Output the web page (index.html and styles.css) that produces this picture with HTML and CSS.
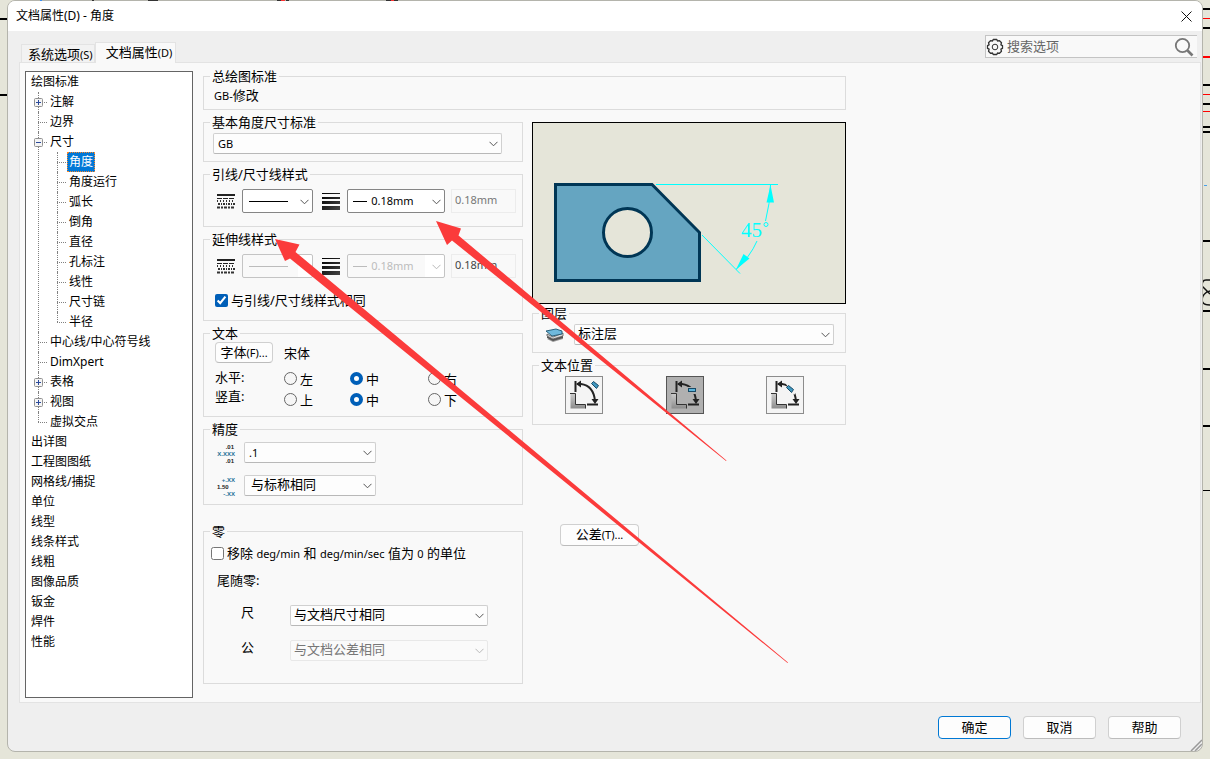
FILE: index.html
```html
<!DOCTYPE html>
<html lang="zh-CN">
<head>
<meta charset="utf-8">
<title>文档属性(D) - 角度</title>
<link rel="stylesheet" href="styles.css">
</head>
<body>
<svg class="defs" width="0" height="0" aria-hidden="true">
  <defs>
    <linearGradient id="dark" x1="0" x2="1" y1="0" y2="1"><stop offset="0" stop-color="#000"/><stop offset="1" stop-color="#444"/></linearGradient>
    <linearGradient id="grey" x1="0" x2="0" y1="0" y2="1"><stop offset="0" stop-color="#ccc"/><stop offset="1" stop-color="#8c8c8c"/></linearGradient>
    <symbol id="chev" viewBox="0 0 9 6"><path d="M.5 .8 4.5 4.8 8.5 .8" fill="none" stroke="currentColor"/></symbol>
    <symbol id="plus" viewBox="0 0 9 9"><rect x=".5" y=".5" width="8" height="8" rx="1" fill="#f4f4f4" stroke="#919191"/><path d="M2 4.5h5M4.5 2v5" stroke="#2b4a9b"/></symbol>
    <symbol id="minus" viewBox="0 0 9 9"><rect x=".5" y=".5" width="8" height="8" rx="1" fill="#f4f4f4" stroke="#919191"/><path d="M2 4.5h5" stroke="#2b4a9b"/></symbol>
    <symbol id="styles" viewBox="0 0 19 16">
      <path d="M0 2h18" stroke="#222" stroke-width="2"/>
      <path d="M0 5.500h18" stroke="#222" stroke-dasharray="5 1 5 1"/>
      <path d="M0 8h18" stroke="#333" stroke-width="2" stroke-dasharray="1 2"/>
      <path d="M1 11h17" stroke="#333" stroke-width="2" stroke-dasharray="2 1 1 1"/>
      <path d="M0 14.500h18" stroke="#333" stroke-width="2" stroke-dasharray="3 1 2 1"/>
    </symbol>
    <symbol id="weights" viewBox="0 0 22 18">
      <path d="M3 1h18v1H3zM3 5h18v2H3zM3 9h18v3H3zM3 14h18v4H3z" fill="url(#dark)"/>
    </symbol>
    <symbol id="arc" viewBox="0 0 36 36">
      <path d="M4.500 16.500h5.500v11.500h9.500v3.500H4.500z" fill="url(#grey)"/>
      <path d="M4 16.500h5.500v11h10v4" fill="none" stroke="#333"/>
      <path d="M9.500 4v11M21 27.500h11" stroke="#222" stroke-width="2"/>
      <path d="M11 7h4C23 8 28 14 29 24" fill="none" stroke="#222" stroke-width="2"/>
      <path d="M10 7l5-3.500v7zM29 27l-3.500-5h7z" fill="#222"/>
    </symbol>
  </defs>
</svg>

<svg class="sheet" width="8" height="110" aria-hidden="true"><path d="M0 19h8M0 95h8" stroke="#000" stroke-width="2"/></svg>
<svg class="sheet sheet-right" width="8" height="500" aria-hidden="true">
  <path d="M0 9h8M0 28h8M0 85h8M0 104h8M0 127h8M0 132h8M0 241h8M0 311h8M0 369h8M0 426h8" stroke="#000" stroke-width="2"/>
  <path d="M0 490.500h8" stroke="#000"/>
  <path d="M0 18.500h8M0 94.500h8M0 111.500h8" stroke="#f00"/>
  <path d="M0 57h8" stroke="#f00" stroke-width="2"/>
  <path d="M2 185.500h3" stroke="#4aa0e8"/>
  <path d="M8 280H4C1 280 0 283 0 286L8 294M8 291C3 292 0 296 0 300C0 303 2 305 8 305" fill="none" stroke="#111" stroke-width="1.500"/>
</svg>

<main class="window">
  <header class="titlebar">
    <h1>文档属性(D) - 角度</h1>
    <button class="close" aria-label="关闭"><svg width="11" height="11" viewBox="0 0 11 11"><path d="M.5.5l10 10M10.500.5l-10 10" stroke="#111"/></svg></button>
  </header>

  <div class="tabbar">
    <div class="tabs" role="tablist">
      <button class="tab" role="tab">系统选项<small>(S)</small></button>
      <button class="tab active" role="tab" aria-selected="true">文档属性<small>(D)</small></button>
    </div>
    <label class="search">
      <svg width="18" height="18" viewBox="0 0 18 18" fill="none" stroke="#333"><circle cx="9" cy="9" r="2.800"/><path d="M7.200 1.500h3.600l.7 1.500 2-.3 2 2-.6 2.100 1.600.8v2.800l-1.600.8.6 2.100-2 2-2-.3-.7 1.500H7.200l-.7-1.500-2 .3-2-2 .6-2.100-1.600-.8V7.600l1.600-.8-.6-2.100 2-2 2 .3z" stroke-width="1.300" stroke-linejoin="round"/></svg>
      <input type="text" placeholder="搜索选项" aria-label="搜索选项">
      <svg width="20" height="20" viewBox="0 0 20 20" fill="none" stroke="#777"><circle cx="8.500" cy="8.500" r="6.700" stroke-width="1.800"/><path d="M13.500 13.500l5 5" stroke-width="2.600"/></svg>
    </label>
  </div>

  <div class="panel">
    <nav class="tree" aria-label="选项">
      <ul>
        <li><span class="row"><span class="name">绘图标准</span></span>
          <ul class="level1">
            <li><span class="row"><button class="toggle" aria-label="展开"><svg width="9" height="9"><use href="#plus"/></svg></button><span class="name">注解</span></span></li>
            <li><span class="row"><span class="name">边界</span></span></li>
            <li><span class="row"><button class="toggle" aria-label="折叠"><svg width="9" height="9"><use href="#minus"/></svg></button><span class="name">尺寸</span></span>
              <ul class="level2">
                <li><span class="row"><span class="name selected">角度</span></span></li>
                <li><span class="row"><span class="name">角度运行</span></span></li>
                <li><span class="row"><span class="name">弧长</span></span></li>
                <li><span class="row"><span class="name">倒角</span></span></li>
                <li><span class="row"><span class="name">直径</span></span></li>
                <li><span class="row"><span class="name">孔标注</span></span></li>
                <li><span class="row"><span class="name">线性</span></span></li>
                <li><span class="row"><span class="name">尺寸链</span></span></li>
                <li><span class="row"><span class="name">半径</span></span></li>
              </ul>
            </li>
            <li><span class="row"><span class="name">中心线/中心符号线</span></span></li>
            <li><span class="row"><span class="name">DimXpert</span></span></li>
            <li><span class="row"><button class="toggle" aria-label="展开"><svg width="9" height="9"><use href="#plus"/></svg></button><span class="name">表格</span></span></li>
            <li><span class="row"><button class="toggle" aria-label="展开"><svg width="9" height="9"><use href="#plus"/></svg></button><span class="name">视图</span></span></li>
            <li><span class="row"><span class="name">虚拟交点</span></span></li>
          </ul>
        </li>
        <li><span class="row"><span class="name">出详图</span></span></li>
        <li><span class="row"><span class="name">工程图图纸</span></span></li>
        <li><span class="row"><span class="name">网格线/捕捉</span></span></li>
        <li><span class="row"><span class="name">单位</span></span></li>
        <li><span class="row"><span class="name">线型</span></span></li>
        <li><span class="row"><span class="name">线条样式</span></span></li>
        <li><span class="row"><span class="name">线粗</span></span></li>
        <li><span class="row"><span class="name">图像品质</span></span></li>
        <li><span class="row"><span class="name">钣金</span></span></li>
        <li><span class="row"><span class="name">焊件</span></span></li>
        <li><span class="row"><span class="name">性能</span></span></li>
      </ul>
    </nav>

    <form class="form">
      <fieldset class="g-overall"><legend>总绘图标准</legend><p><small>GB-</small>修改</p></fieldset>

      <div class="col">
        <fieldset class="g-base"><legend>基本角度尺寸标准</legend>
          <span class="select"><select class="latin" aria-label="基本角度尺寸标准"><option>GB</option></select><svg class="chev"><use href="#chev"/></svg></span>
        </fieldset>

        <fieldset class="g-leader"><legend>引线/尺寸线样式</legend>
          <div class="lines">
            <svg width="19" height="16"><use href="#styles"/></svg>
            <span class="select strong style"><select aria-label="引线样式"><option label=" "></option></select><svg class="stroke" width="39" height="1"><rect width="39" height="1" fill="currentColor"/></svg><svg class="chev"><use href="#chev"/></svg></span>
            <svg width="22" height="18"><use href="#weights"/></svg>
            <span class="select strong weight"><select class="latin" aria-label="引线粗细"><option>0.18mm</option></select><svg class="stroke" width="14" height="1"><rect width="14" height="1" fill="currentColor"/></svg><svg class="chev"><use href="#chev"/></svg></span>
            <input class="value" type="text" value="0.18mm" aria-label="自定义粗细" disabled>
          </div>
        </fieldset>

        <fieldset class="g-ext"><legend>延伸线样式</legend>
          <div class="lines">
            <svg width="19" height="16"><use href="#styles"/></svg>
            <span class="select dim style"><select aria-label="延伸线样式" disabled><option label=" "></option></select><svg class="stroke" width="39" height="1"><rect width="39" height="1" fill="currentColor"/></svg><svg class="chev"><use href="#chev"/></svg></span>
            <svg width="22" height="18"><use href="#weights"/></svg>
            <span class="select dim weight"><select class="latin" aria-label="延伸线粗细" disabled><option>0.18mm</option></select><svg class="stroke" width="14" height="1"><rect width="14" height="1" fill="currentColor"/></svg><svg class="chev"><use href="#chev"/></svg></span>
            <input class="value dark" type="text" value="0.18mm" aria-label="自定义粗细" disabled>
          </div>
          <label class="check"><input type="checkbox" checked>与引线/尺寸线样式相同</label>
        </fieldset>

        <fieldset class="g-text"><legend>文本</legend>
          <div class="font"><button type="button" class="btn">字体<small>(F)...</small></button><span>宋体</span></div>
          <div class="align">
            <div class="heads"><span id="hz">水平:</span><span id="vt">竖直:</span></div>
            <div class="radios">
              <div role="radiogroup" aria-labelledby="hz"><label><input type="radio" name="h">左</label><label><input type="radio" name="h" checked>中</label><label><input type="radio" name="h">右</label></div>
              <div role="radiogroup" aria-labelledby="vt"><label><input type="radio" name="v">上</label><label><input type="radio" name="v" checked>中</label><label><input type="radio" name="v">下</label></div>
            </div>
          </div>
        </fieldset>

        <fieldset class="g-prec"><legend>精度</legend>
          <div class="prec">
            <svg width="20" height="22" class="digits" aria-hidden="true"><text x="18" y="7" text-anchor="end">.01</text><text class="blue" x="19" y="14" text-anchor="end">X.XXX</text><text x="18" y="21" text-anchor="end">.01</text></svg>
            <span class="select"><select class="latin" aria-label="单位精度"><option>.1</option></select><svg class="chev"><use href="#chev"/></svg></span>
          </div>
          <div class="prec">
            <svg width="20" height="22" class="digits" aria-hidden="true"><text class="blue" x="19" y="7" text-anchor="end">+.XX</text><text x="1" y="14">1.50</text><text class="blue" x="19" y="21" text-anchor="end">-.XX</text></svg>
            <span class="select"><select class="indent" aria-label="公差精度"><option>与标称相同</option></select><svg class="chev"><use href="#chev"/></svg></span>
          </div>
        </fieldset>

        <fieldset class="g-zero"><legend>零</legend>
          <label class="check"><input type="checkbox"><span>移除 <small>deg/min</small> 和 <small>deg/min/sec</small> 值为 <small>0</small> 的单位</span></label>
          <p>尾随零:</p>
          <div class="zero"><label for="dim">尺</label><span class="select"><select id="dim"><option>与文档尺寸相同</option></select><svg class="chev"><use href="#chev"/></svg></span></div>
          <div class="zero"><label for="tol">公</label><span class="select faint"><select id="tol" disabled><option>与文档公差相同</option></select><svg class="chev"><use href="#chev"/></svg></span></div>
        </fieldset>
      </div>

      <div class="col side">
        <svg class="preview" viewBox="533 124 312 180" preserveAspectRatio="xMinYMin" role="img" aria-label="角度尺寸预览">
          <path d="M555.500 185.500H652L699.500 233.500V281.500H555.500Z" fill="#65a5c1" stroke="#003655" stroke-width="3"/>
          <circle cx="627.500" cy="233.500" r="24" fill="#e5e5d9" stroke="#003655" stroke-width="3"/>
          <g stroke="#0ff" fill="none"><path d="M656 185.500H778M702 236L740 274.500M770.500 186Q770 205 765.500 222M757 242Q750 258 736 270.500"/></g>
          <path d="M770.500 186L766.500 203.500H774ZM736 270.500L743.500 255L749.500 259.500Z" fill="#0ff"/>
          <text x="741" y="238" class="deg">45</text>
          <circle cx="766" cy="225.500" r="2" fill="none" stroke="#0ff"/>
        </svg>
        <fieldset class="g-layer"><legend>图层</legend>
          <div class="layer">
            <svg width="20" height="18" viewBox="0 0 20 18"><path d="M2 13l6 3 10-3v-3L8 13z" fill="#999"/><path d="M2 10l6 3 10-3v2L8 15 2 12z" fill="#555"/><path d="M2 8l6 3 10-4v3L8 13 2 10z" fill="#ddd" stroke="#555" stroke-width=".8"/><path d="M1 5l10-2 6 2v3L7 10z" fill="#6fb9dc" stroke="#1e556f" stroke-width=".9"/></svg>
            <span class="select"><select aria-label="图层"><option>标注层</option></select><svg class="chev"><use href="#chev"/></svg></span>
          </div>
        </fieldset>
        <fieldset class="g-pos"><legend>文本位置</legend>
          <div class="positions">
            <button type="button" aria-label="位置一"><svg width="36" height="36"><use href="#arc"/><path d="M25.500 6.500l2-2 5 4-2 3z" fill="#3f96be" stroke="#174a66"/></svg></button>
            <button type="button" class="on" aria-label="位置二"><svg width="36" height="36"><use href="#arc"/><path d="M20 10h10v7H20z" fill="#b0b0b0"/><rect x="21.500" y="11.500" width="7" height="3" fill="#5cb4dc" stroke="#174a66"/></svg></button>
            <button type="button" aria-label="位置三"><svg width="36" height="36"><use href="#arc"/><path d="M19 7l5-1 6 8-3 4z" fill="#f4f4f4"/><path d="M19.500 10.500l2-2 5 4-2 3z" fill="#3f96be" stroke="#174a66"/></svg></button>
          </div>
        </fieldset>
        <button type="button" class="btn tolerance">公差<small>(T)...</small></button>
      </div>
    </form>
  </div>

  <footer class="footer">
    <button class="btn primary">确定</button><button class="btn">取消</button><button class="btn">帮助</button>
  </footer>
  <svg class="grip" width="12" height="12" viewBox="0 0 12 12" aria-hidden="true"><path d="M1 12L12 1M5 12L12 5M9 12L12 9" stroke="#999" stroke-width="1.500"/></svg>
</main>

<svg class="sheet" width="400" height="1" aria-hidden="true"><path d="M92 .5h2M148 .5h10M277 .5h4M286 .5h3M386 .5h12" stroke="#333"/><path d="M281 .5h4M391 .5h3" stroke="#f33"/><path d="M40 .5h2" stroke="#3a8ef0"/></svg>

<svg class="arrows" width="800" height="670" aria-hidden="true">
  <path d="M436 221L461 228.500L458.500 235.500L726.500 460.500L726 461L452 240.500L447 245Z"/>
  <path d="M275 239L299.500 244.500L295.500 252L788 662.500L787.500 663L290 258.500L285 261Z"/>
</svg>
</body>
</html>
```
FILE: styles.css
```css
* { box-sizing: border-box; }

body {
  margin: 0;
  padding: 0 7px 7px 7px;
  background: #e5e5d9;
  color: #000;
  font: 13px/16px "Noto Sans", "Noto Sans CJK SC", sans-serif;
  overflow: hidden;
}

button, input, select { font: inherit; color: inherit; margin: 0; }
button { padding: 0; }
small { font-size: 11px; line-height: 1; }
p { margin: 0; }
ul { margin: 0; padding: 0; list-style: none; }
svg { display: block; flex: none; }

.defs { position: absolute; }
.sheet { position: absolute; left: 0; top: 0; }
.sheet-right { left: auto; right: 0; }

.window {
  position: relative;
  display: flex;
  flex-direction: column;
  min-height: calc(100vh - 7px);
  border: 1px solid #b4b4ac;
  border-radius: 8px;
  background: #efefef;
  overflow: hidden;
}

.titlebar {
  display: flex;
  align-items: center;
  justify-content: space-between;
  height: 30px;
  padding: 0 10px 0 8px;
  background: #fff;
}
.titlebar h1 { margin: 0; font-size: 12px; font-weight: 400; }
.close { border: 0; background: none; }

.tabbar {
  display: flex;
  justify-content: space-between;
  align-items: flex-end;
  height: 31px;
  padding-left: 13px;
}
.tabs { display: flex; align-items: flex-end; }
.tab {
  height: 18px;
  padding: 0 1px 0 6px;
  border: 1px solid #e3e3e3;
  border-bottom: 0;
  background: #f2f2f2;
  white-space: nowrap;
}
.tab.active {
  position: relative;
  z-index: 1;
  height: 21px;
  margin-bottom: -1px;
  padding: 0 3px 3px 10px;
  background: #f9f9f9;
}

.search {
  display: flex;
  align-items: center;
  gap: 3px;
  width: 212px;
  height: 23px;
  margin: 0 5px 4px 0;
  padding: 0 3px 0 0;
  border: 1px solid #c4c4c4;
  border-right: 0;
  background: #f9f9f9;
}
.search input { flex: 1; min-width: 0; padding: 0 0 2px; border: 0; background: none; }
.search input::placeholder { color: #666; opacity: 1; }

.panel {
  display: flex;
  flex: 1;
  gap: 10px;
  margin: 0 1px 0 11px;
  padding: 8px 0 4px 5px;
  border: 1px solid #e3e3e3;
  background: #f9f9f9;
}

.tree {
  width: 168px;
  flex: none;
  border: 1px solid #646464;
  background: #fff;
  font-size: 12px;
}
.tree li { position: relative; }
.row { position: relative; display: flex; height: 20px; padding-left: 3px; }
.name { padding: 0 2px; line-height: 20px; white-space: nowrap; }
.level1 .row { padding-left: 22px; }
.level2 .row { padding-left: 41px; }
.level1 > li::before, .level2 > li::before {
  content: "";
  position: absolute;
  left: 12px;
  top: 0;
  height: 100%;
  border-left: 1px dotted #808080;
}
.level2 > li::before { left: 31px; }
.level1 > li:last-child::before, .level2 > li:last-child::before { height: 10px; }
.level1 .row::before {
  content: "";
  position: absolute;
  left: 12px;
  top: 10px;
  width: 9px;
  border-top: 1px dotted #808080;
}
.level2 .row::before { left: 31px; }
.toggle { position: absolute; left: 8px; top: 6px; border: 0; background: #fff; }
.selected {
  padding: 0 1px;
  border: 1px dotted #ff8728;
  background: #0078d7;
  color: #fff;
  line-height: 18px;
}

.form {
  display: grid;
  grid-template-columns: 320px 314px;
  align-content: start;
  column-gap: 9px;
  row-gap: 4px;
  margin-top: -3px;
}
.col { display: flex; flex-direction: column; gap: 4px; }

/* --inset is the left padding of the group's content; legends stay aligned */
fieldset {
  --inset: 6px;
  min-width: 0;
  margin: 0;
  padding: 0 6px 0 var(--inset);
  border: 1px solid #dcdcdc;
}
legend { margin-left: calc(6px - var(--inset)); padding: 0 2px; }

.g-overall { --inset: 10px; grid-column: 1 / -1; padding-top: 3px; padding-bottom: 6px; }
.g-base { --inset: 9px; padding-top: 3px; padding-right: 20px; padding-bottom: 7px; }
.g-leader { --inset: 13px; padding-top: 7px; padding-bottom: 13px; }
.g-ext { --inset: 11px; padding-top: 7px; padding-bottom: 12px; }
.g-ext .lines { margin: 0 0 14px 2px; }
.g-text { --inset: 11px; padding-top: 1px; padding-bottom: 6px; }
.g-prec { --inset: 12px; padding-top: 5px; padding-bottom: 8px; }
.g-zero { --inset: 7px; margin-top: 14px; padding-top: 6px; padding-bottom: 22px; }

.select { position: relative; display: block; }
.select select {
  appearance: none;
  display: block;
  width: 100%;
  height: 21px;
  padding: 0 20px 3px 3px;
  border: 1px solid #d0d0d0;
  border-bottom-color: #b8b8b8;
  border-radius: 2px;
  background: #fdfdfd;
  opacity: 1;
}
.select select.latin { padding-left: 4px; padding-bottom: 0; font-size: 11px; }
.select select.indent { padding-left: 6px; }
.chev {
  position: absolute;
  right: 4px;
  top: 8px;
  width: 9px;
  height: 6px;
  color: #555;
  pointer-events: none;
}
.stroke { position: absolute; left: 7px; top: 12px; pointer-events: none; }
.strong select, .dim select { height: 24px; background: #fff; border-color: #858585; }
.strong .chev, .dim .chev { top: 10px; }
.dim { color: #bcbcbc; }
.dim select { border-color: #c4c4c4; background: linear-gradient(90deg, #f9f9f9 80%, #fff 80%); }
.dim .chev, .faint .chev { color: #b8b8b8; }
.faint { color: #777; }
.faint select { border-color: #e8e8e8; background: #fafafa; }
.style { width: 72px; }
.weight { width: 99px; }
.weight .stroke { left: 6px; }
.weight select.latin { padding-left: 23px; }

.lines { display: flex; align-items: center; gap: 6px; }
.value {
  width: 65px;
  height: 24px;
  padding: 0 0 4px 3px;
  border: 1px solid #ececec;
  background: #f9f9f9;
  color: #777;
  font-size: 11px;
}
.value.dark { color: #444; }

.check { display: flex; align-items: center; gap: 3px; height: 16px; white-space: nowrap; }
.check input { width: 13px; height: 13px; accent-color: #005fb8; }

.btn {
  height: 22px;
  padding-bottom: 2px;
  border: 1px solid #d0d0d0;
  border-bottom-color: #bcbcbc;
  border-radius: 4px;
  background: #fdfdfd;
  white-space: nowrap;
}
.font { display: flex; align-items: center; gap: 11px; }
.font .btn { width: 58px; height: 21px; }

.align { display: flex; margin-top: 5px; }
.heads { display: flex; flex-direction: column; width: 69px; line-height: 19px; }
.radios > div { display: grid; grid-template-columns: 66px 78px 40px; height: 21px; }
.radios label { display: flex; align-items: center; gap: 3px; }
.radios input {
  appearance: none;
  width: 13px;
  height: 13px;
  border: 1px solid #666;
  border-radius: 50%;
  background: #f6f6f6;
}
.radios input:checked { border: 4px solid #005fb8; background: #fff; }

.prec { display: flex; align-items: center; gap: 8px; height: 21px; }
.prec + .prec { margin-top: 12px; }
.prec .select { width: 132px; }
.digits { font: 700 6px/7px "Liberation Sans", sans-serif; fill: #222; }
.digits .blue { fill: #1b6f96; }

.g-zero p { margin: 11px 0 17px 6px; }
.zero { display: flex; margin-left: 30px; }
.zero label { width: 49px; line-height: 14px; }
.zero .select { width: 198px; }
.zero + .zero { margin-top: 14px; }

.side { padding-top: 8px; }
.preview { width: 100%; height: 182px; border: 1px solid #000; background: #e5e5d9; }
.deg { font: 21px "Liberation Serif", serif; fill: #0ff; }
.g-layer { --inset: 12px; margin-top: -3px; padding-top: 3px; padding-right: 11px; padding-bottom: 7px; }
.layer { display: flex; align-items: center; gap: 9px; }
.layer .select { flex: 1; }
.g-pos { --inset: 32px; padding-top: 3px; padding-right: 41px; padding-bottom: 10px; }
.positions { display: flex; justify-content: space-between; }
.positions button { border: 1px solid #8c8c8c; background: #f4f4f4; }
.positions button.on { border-color: #555; background: #b0b0b0; }
.tolerance { align-self: flex-start; width: 79px; margin: 95px 0 0 28px; }

.footer { display: flex; justify-content: flex-end; gap: 12px; padding: 13px 21px 12px; }
.footer .btn { width: 73px; height: 23px; }
.footer .primary { border-color: #0078d4; }
.grip { position: absolute; right: 0; bottom: 0; }

.arrows { position: absolute; left: 0; top: 0; fill: #fb3b3b; pointer-events: none; }
```
